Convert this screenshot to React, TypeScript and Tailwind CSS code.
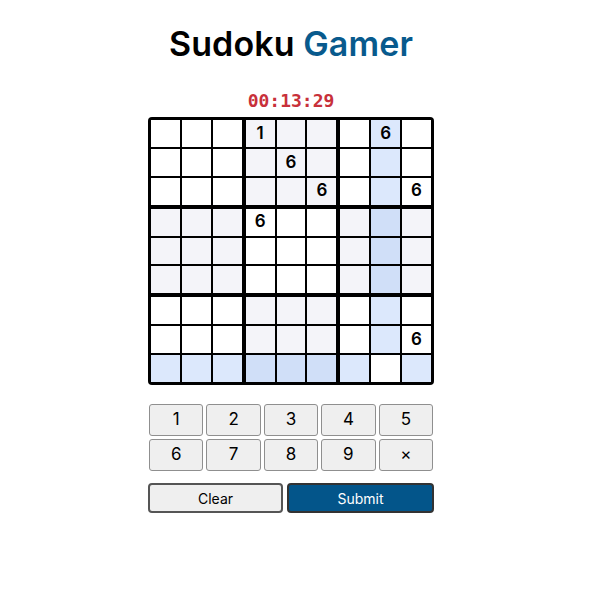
import React from 'react';

// givens on the board: row, col -> value
const GIVENS: Record<string, number> = {
  '0-3': 1,
  '0-7': 6,
  '1-4': 6,
  '2-5': 6,
  '2-8': 6,
  '3-3': 6,
  '7-8': 6,
};

const SELECTED = { row: 8, col: 7 };

function cellColor(r: number, c: number) {
  const shaded = (Math.floor(r / 3) + Math.floor(c / 3)) % 2 === 1;
  if (r === SELECTED.row && c === SELECTED.col) return 'bg-white';
  const hit = r === SELECTED.row || c === SELECTED.col;
  if (hit) return shaded ? 'bg-[#d0dff8]' : 'bg-[#dce8fc]';
  return shaded ? 'bg-[#f4f4f9]' : 'bg-white';
}

const Box: React.FC<{ br: number; bc: number }> = ({ br, bc }) => (
  <div className="grid grid-cols-3 grid-rows-3 gap-[2px]">
    {[0, 1, 2].map((i) =>
      [0, 1, 2].map((j) => {
        const r = br * 3 + i;
        const c = bc * 3 + j;
        const v = GIVENS[`${r}-${c}`];
        return (
          <div
            key={`${r}-${c}`}
            className={`${cellColor(r, c)} flex items-center justify-center text-[17px] font-semibold text-black`}
          >
            {v ?? ''}
          </div>
        );
      })
    )}
  </div>
);

export default function App() {
  return (
    <div
      className="w-[582px] flex flex-col items-center bg-white"
      style={{ fontFamily: 'Inter, "Noto Sans", sans-serif' }}
    >
      <h1 className="mt-[24px] text-[34px] font-semibold leading-[40px] tracking-[0.1px] text-black">
        Sudoku <span className="text-[#085a8d]">Gamer</span>
      </h1>

      <div
        className="mt-[26px] text-[18px] font-bold leading-[22px] text-[#c8303a]"
        style={{ fontFamily: '"DejaVu Sans Mono", monospace' }}
      >
        00:13:29
      </div>

      <div className="mt-[5px] w-[286px] h-[268px] bg-black p-[3px] rounded-[4px] grid grid-cols-3 grid-rows-3 gap-[4px]">
        {[0, 1, 2].map((br) => [0, 1, 2].map((bc) => <Box key={`${br}${bc}`} br={br} bc={bc} />))}
      </div>

      <div className="mt-[19px] w-[284px] grid grid-cols-5 gap-[3px]">
        {['1', '2', '3', '4', '5', '6', '7', '8', '9', '×'].map((k) => (
          <button
            key={k}
            className="h-[32px] bg-[#efefef] border border-[#8f8f8f] rounded-[3px] text-[17px] text-black flex items-center justify-center"
          >
            {k}
          </button>
        ))}
      </div>

      <div className="mt-[12px] w-[286px] flex gap-[4px]">
        <button className="w-[135px] h-[30px] bg-[#efefef] border-2 border-[#555] rounded-[4px] text-[14px] text-black">
          Clear
        </button>
        <button className="flex-1 h-[30px] bg-[#03558a] border-2 border-[#333] rounded-[4px] text-[14px] text-white">
          Submit
        </button>
      </div>
    </div>
  );
}
